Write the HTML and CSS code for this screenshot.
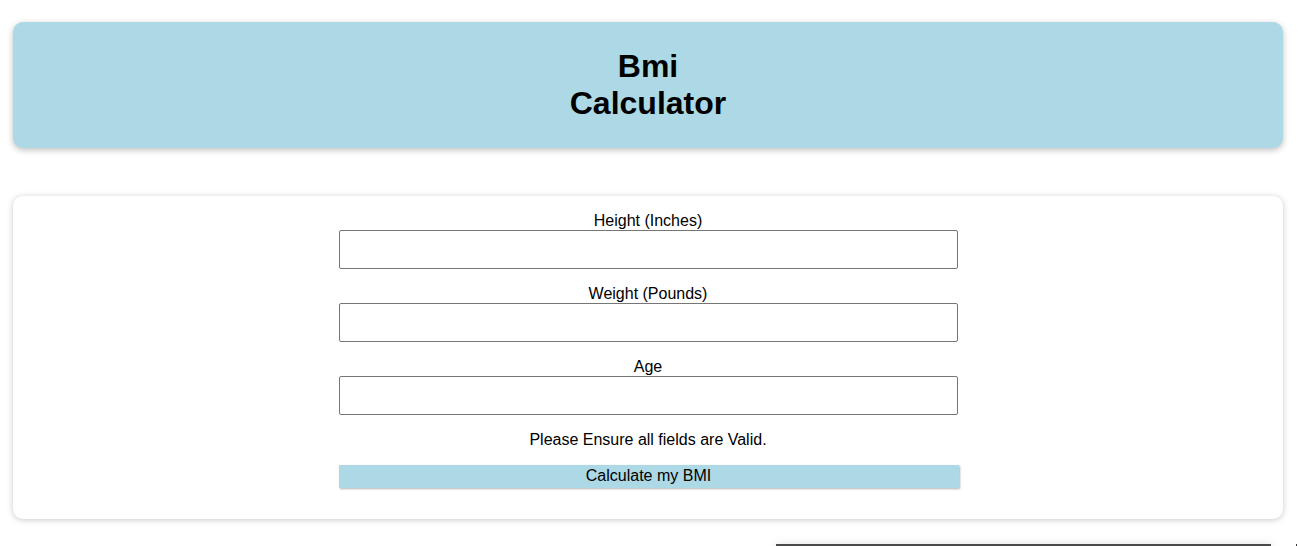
FILE: index.html
```html
<!DOCTYPE html>
<html>
<head>
<meta charset="utf-8">
<link rel="stylesheet" href="styles.css">
</head>
<body>
<header class="header">
  <h1 class="title">Bmi Calculator</h1>
</header>
<main class="card">
  <form class="form">
    <label class="field">
      <span class="label">Height (Inches)</span>
      <input class="input" type="text">
    </label>
    <label class="field">
      <span class="label">Weight (Pounds)</span>
      <input class="input" type="text">
    </label>
    <label class="field">
      <span class="label">Age</span>
      <input class="input" type="text">
    </label>
    <p class="note">Please Ensure all fields are Valid.</p>
    <button class="button" type="button">Calculate my BMI</button>
  </form>
</main>
<div class="bottom">
  <div class="result"></div>
  <div class="mark"></div>
</div>
</body>
</html>
```
FILE: styles.css
```css
html, body {
  margin: 0;
  padding: 0;
  background: #ffffff;
  overflow: hidden;
}
body {
  padding: 22px 15px 0 13px;
  font-family: "Liberation Sans", Arial, sans-serif;
  color: #000;
}
.header {
  background: #add8e6;
  border-radius: 10px;
  box-shadow: 0 2px 6px rgba(0, 0, 0, 0.25);
  padding: 26px 0;
  height: 74px;
}
.title {
  margin: 0 auto;
  width: min-content;
  text-align: center;
  font-size: 32px;
  font-weight: bold;
  line-height: 37px;
}
.card {
  margin-top: 48px;
  background: #fff;
  border-radius: 10px;
  box-shadow: 0 1px 6px rgba(0, 0, 0, 0.22);
  padding: 16px 0 31px;
}
.form {
  display: flex;
  flex-direction: column;
  align-items: center;
}
.field {
  display: flex;
  flex-direction: column;
  align-items: center;
  margin-bottom: 16px;
}
.label {
  font-size: 16px;
  line-height: 18px;
}
.input {
  box-sizing: border-box;
  width: 619px;
  height: 39px;
  margin: 0 0 0 1px;
  border: 1px solid #767676;
  border-radius: 2px;
  padding: 0 6px;
  font: 16px "Liberation Sans", Arial, sans-serif;
}
.note {
  margin: 0 0 16px;
  font-size: 16px;
  line-height: 18px;
}
.button {
  box-sizing: border-box;
  width: 620px;
  height: 23px;
  margin-left: 1px;
  padding: 0 0 1px;
  border: none;
  background: #add8e6;
  box-shadow: 1px 1px 2px rgba(0, 0, 0, 0.3);
  font: 16px "Liberation Sans", Arial, sans-serif;
  color: #000;
  line-height: 22px;
}
.bottom {
  display: flex;
  justify-content: flex-end;
  align-items: flex-start;
  margin: 25px -15px 0 0;
  height: 10px;
}
.result {
  width: 495px;
  height: 10px;
  border-top: 2px solid #4a4a4a;
  box-shadow: 0 0 10px rgba(0, 0, 0, 0.12);
  background: #fff;
  margin-right: 25px;
}
.mark {
  width: 1px;
  height: 3px;
  background: #333;
  margin: 0 1px 0 0;
}
```
